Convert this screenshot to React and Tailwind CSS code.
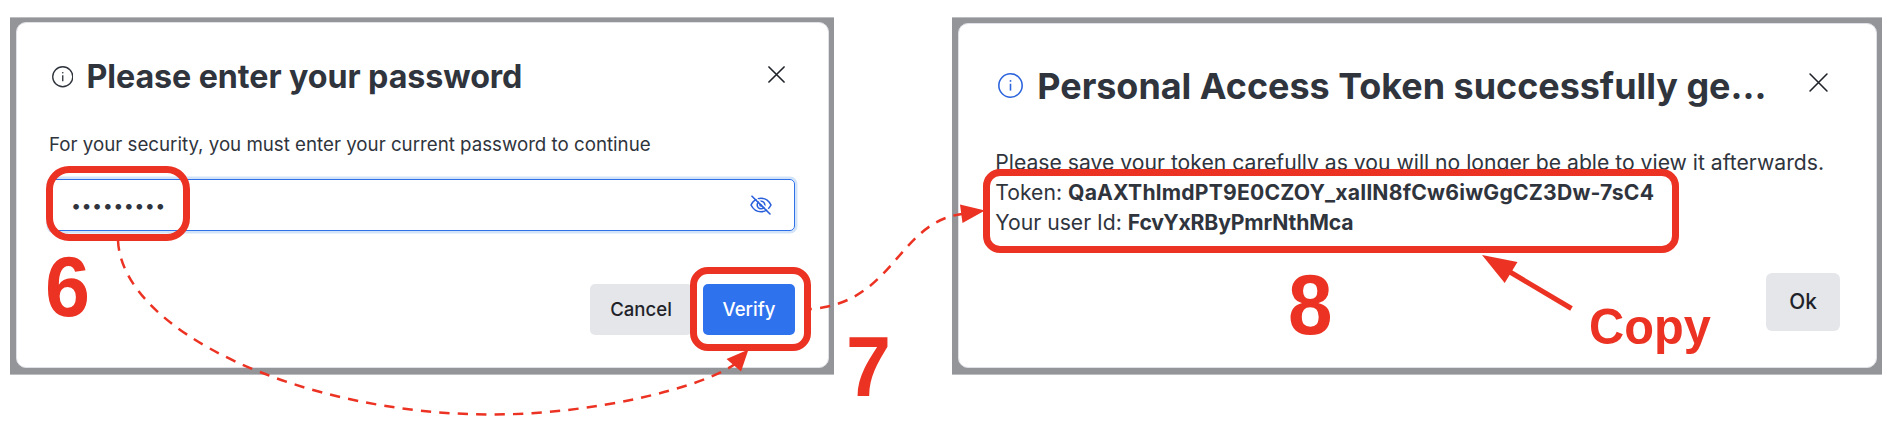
import React from "react";

function InfoIcon({ className }) {
  return (
    <svg viewBox="0 0 24 24" fill="none" stroke="currentColor" strokeWidth="1.5" className={className}>
      <circle cx="12" cy="12" r="11.2" />
      <path d="M12 10.3v6.6" />
      <circle cx="12" cy="7.6" r="0.9" fill="currentColor" stroke="none" />
    </svg>
  );
}

function CloseIcon({ className }) {
  return (
    <svg viewBox="0 0 18 18" fill="none" stroke="currentColor" strokeLinecap="round" className={className}>
      <path d="M1 1 17 17M17 1 1 17" />
    </svg>
  );
}

function EyeOffIcon() {
  return (
    <svg viewBox="0 0 22 20" fill="none" stroke="currentColor" strokeWidth="1.6" className="h-5 w-[22px] shrink-0 text-[#2a60dc]">
      <path d="M1 10C3.3 5.5 6.8 3.2 11 3.2S18.700 5.500 21 10C18.700 14.500 15.200 16.800 11 16.800S3.300 14.500 1 10Z" />
      <circle cx="11" cy="10" r="3.8" />
      <circle cx="11" cy="10" r="1" />
      <path d="M3.200 0 21 17.600" stroke="#fff" strokeWidth="1.400" />
      <path d="M2 1.200 20 19" strokeLinecap="round" />
    </svg>
  );
}

function Backdrop({ className, children }) {
  return <div className={`flex h-[358px] shrink-0 border-y border-[#bcbdc0] bg-[#949599] ${className}`}>{children}</div>;
}

function PasswordDialog() {
  return (
    <Backdrop className="w-[824px] pt-[4px] pr-[5px] pb-[6px] pl-[6px]">
      <section className="flex grow flex-col rounded-[10px] border border-[#dfe1e6] bg-white pt-[34px] pr-[33px] pl-[32px]">
        <header className="flex h-10 items-center text-[#2f343d]">
          <InfoIcon className="ml-[2.500px] h-[21.500px] w-[21.500px] shrink-0" />
          <h2 className="ml-[13.500px] text-[32.250px] leading-10 font-bold tracking-[-0.080px] whitespace-nowrap">
            Please enter your password
          </h2>
          <CloseIcon className="mr-[10px] mb-[5px] ml-auto h-[17px] w-[17px] stroke-[1.700] text-[#1f2329]" />
        </header>
        <p className="mt-[34px] text-[18.720px] leading-7 whitespace-nowrap text-[#2f343d]">
          For your security, you must enter your current password to continue
        </p>
        <div className="mt-[20px] flex h-[52px] items-center justify-between rounded-[5px] border border-[#2f6fe8] pr-[22px] pl-[21px] ring-[2.500px] ring-[#d3e4f8]">
          <span className="text-[18px] tracking-[0.420px] text-[#2f343d]">•••••••••</span>
          <EyeOffIcon />
        </div>
        <footer className="mt-[53px] flex justify-end gap-[11px] text-[18.600px] font-medium">
          <button className="h-[51px] w-[102px] rounded-[5px] bg-[#e4e6ea] text-[#1f2329]">Cancel</button>
          <button className="h-[51px] w-[92px] rounded-[5px] bg-[#2f72ee] text-white">Verify</button>
        </footer>
      </section>
    </Backdrop>
  );
}

function TokenDialog() {
  return (
    <Backdrop className="ml-[118px] w-[930px] pt-[5px] pr-[5px] pb-[6px] pl-[6px]">
      <section className="flex grow flex-col rounded-[10px] border border-[#dfe1e6] bg-white pt-[39.500px] pr-[27px] pl-[36.300px]">
        <header className="flex h-11 items-center">
          <InfoIcon className="ml-[3px] h-[25px] w-[25px] shrink-0 text-[#2a63dd]" />
          <h2 className="ml-[14px] text-[35.950px] leading-[44px] font-bold tracking-[-0.020px] whitespace-nowrap text-[#2f343d]">
            Personal Access Token successfully ge…
          </h2>
          <CloseIcon className="mr-[21px] mb-[6px] ml-auto h-[19px] w-[19px] stroke-[1.500] text-[#1f2329]" />
        </header>
        <div className="mt-[39px] text-[21.170px] leading-[30.200px] whitespace-nowrap text-[#2f343d]">
          <p>Please save your token carefully as you will no longer be able to view it afterwards.</p>
          <p>
            Token: <strong className="tracking-[0.200px]">QaAXThlmdPT9E0CZOY_xaIlN8fCw6iwGgCZ3Dw-7sC4</strong>
          </p>
          <p>
            Your user Id: <strong className="tracking-[-0.150px]">FcvYxRByPmrNthMca</strong>
          </p>
        </div>
        <footer className="mt-[35.600px] mr-[9px] flex justify-end text-[20.800px] font-medium">
          <button className="h-[58px] w-[74px] rounded-[6px] bg-[#e4e6ea] text-[#1f2329]">Ok</button>
        </footer>
      </section>
    </Backdrop>
  );
}

function Annotations() {
  return (
    <div className="pointer-events-none absolute inset-0 font-['Liberation_Sans',Arial,sans-serif] leading-none font-bold text-[#ec3323]">
      <svg viewBox="0 0 1892 446" className="absolute inset-0 h-full w-full" fill="none" stroke="currentColor">
        <path d="M118 240.500C122 330 300 414.500 492 414.500C592 414.500 702 388 735 364" strokeWidth="2.500" strokeDasharray="10.300 8.150" />
        <path d="M811 309C894 303 898 222 962 214" strokeWidth="2.500" strokeDasharray="10.300 8.150" strokeDashoffset="9.500" />
        <path d="M748.500 349.500 726.500 359 741 371.500ZM985 210.500 960 204.500 962.500 223ZM1482 255 1517.500 262 1504.700 283Z" fill="currentColor" stroke="none" />
        <path d="M1510 272 1571.500 308.500" strokeWidth="5" />
      </svg>
      <div className="absolute top-[165.500px] left-[46px] h-[75px] w-[144px] rounded-[23px] border-[7.700px] border-current" />
      <div className="absolute top-[266.500px] left-[689.500px] h-[84px] w-[121px] rounded-[18px] border-[7.700px] border-current" />
      <div className="absolute top-[168.500px] left-[983px] h-[84px] w-[696px] rounded-[17px] border-[7.700px] border-current" />
      <span className="absolute top-[243px] left-[44.700px] origin-left scale-x-[0.940] text-[86px]">6</span>
      <span className="absolute top-[323px] left-[845.500px] origin-left scale-x-[0.940] text-[86px]">7</span>
      <span className="absolute top-[261px] left-[1287.500px] origin-left scale-x-[0.930] text-[86px]">8</span>
      <span className="absolute top-[302px] left-[1588.500px] origin-left scale-x-[0.975] text-[50px]">Copy</span>
    </div>
  );
}

export default function App() {
  return (
    <main className="relative flex h-[446px] w-[1892px] overflow-hidden bg-white pt-[17px] pl-[10px] font-['Inter','Liberation_Sans',sans-serif]">
      <PasswordDialog />
      <TokenDialog />
      <Annotations />
    </main>
  );
}
